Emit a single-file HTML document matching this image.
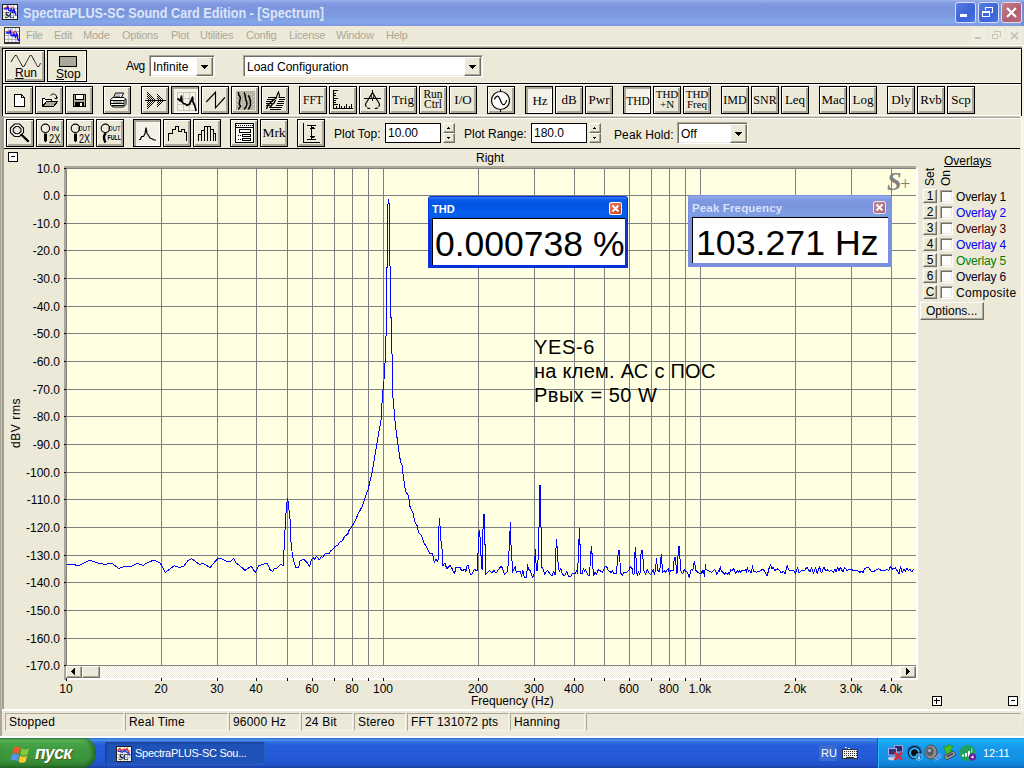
<!DOCTYPE html>
<html><head><meta charset="utf-8"><title>SpectraPLUS-SC</title>
<style>
html,body{margin:0;padding:0}
body{width:1024px;height:768px;overflow:hidden;position:relative;background:#ECE9D8;font-family:"Liberation Sans",sans-serif;font-size:12px;color:#000;line-height:1}
.a{position:absolute}
.t{position:absolute;white-space:nowrap;line-height:14px;font-size:12px}
svg{position:absolute;overflow:visible}
/* toolbar buttons */
.b{position:absolute;width:26px;height:26px;border:1px solid #000;background:#ECE9D8;box-shadow:inset 1px 1px 0 #fff,inset -2px -2px 0 #ACA899}
.b.p{box-shadow:inset 2px 2px 0 #ACA899,inset -1px -1px 0 #fff;background:#F3F1E8}
.b.p .bt{margin:1px 0 0 1px}
.b svg{left:0;top:0}
.bt{position:absolute;left:0;width:26px;text-align:center;font-family:"Liberation Serif",serif;font-size:13px;line-height:12px;white-space:nowrap}
/* sunken edit boxes */
.sunk{position:absolute;background:#fff;box-sizing:border-box;border:1px solid;border-color:#ACA899 #fff #fff #ACA899;box-shadow:inset 1px 1px 0 #716F64,inset -1px -1px 0 #ECE9D8}
.raised{position:absolute;background:#ECE9D8;box-sizing:border-box;border:1px solid;border-color:#fff #716F64 #716F64 #fff;box-shadow:inset -1px -1px 0 #ACA899}
.chk{position:absolute;width:13px;height:13px;box-sizing:border-box;background:#fff;border:1px solid;border-color:#ACA899 #fff #fff #ACA899;box-shadow:inset 1px 1px 0 #716F64,inset -1px -1px 0 #ECE9D8}
.ob{position:absolute;width:14px;height:14px;box-sizing:border-box;background:#ECE9D8;border:1px solid;border-color:#fff #716F64 #716F64 #fff;box-shadow:inset -1px -1px 0 #ACA899;font-size:12px;line-height:12px;text-align:center}
.m{position:absolute;top:29px;font-size:11px;line-height:13px;color:#ACA899;white-space:nowrap;letter-spacing:-.25px}
.yl{position:absolute;left:20px;width:40px;text-align:right;font-size:12px;line-height:14px;white-space:nowrap}
.xl{position:absolute;top:682px;width:40px;text-align:center;font-size:12px;line-height:14px;white-space:nowrap}
.sc{position:absolute;box-sizing:border-box;border:1px solid;border-color:#ACA899 #F6F5EE #F6F5EE #ACA899;letter-spacing:.2px;font-size:12px;line-height:14px;white-space:nowrap;padding:1px 0 0 3px;height:18px;top:713px}
</style></head><body>

<!-- title bar -->
<div class="a" id="tb" style="left:0;top:0;width:1024px;height:26px;background:linear-gradient(to bottom,#9DB0EC 0,#8AA2E6 2px,#7D97E0 5px,#7B96DF 12px,#7F9EE3 18px,#84A7E8 22px,#7E9DE4 25px,#7A94DC 26px)"></div>
<div class="a" style="left:1021px;top:2px;width:3px;height:24px;background:#6B80D0;opacity:.55"></div>
<!-- app icon -->
<svg style="left:2px;top:4px" width="16" height="16" viewBox="0 0 18 18" shape-rendering="crispEdges">
<rect x="0" y="0" width="18" height="18" fill="#222"/><rect x="1" y="1" width="16" height="16" fill="#F4F4F0"/>
<path d="M1 5h16M1 9h16M1 13h16M5 1v16M9 1v16M13 1v16" stroke="#B8B8B8" stroke-width="1"/>
<path d="M2 4.500l3-.5 2-1 1 2 2 .5 2-2 2 3 1.500 3" stroke="#F02020" stroke-width="1" fill="none" shape-rendering="auto"/>
<path d="M2 5.500h3.500l1-2.500 1 4 2 1 1-2.500 1.500 3.500 1.500-3 1 4 1.500 3" stroke="#1010F0" stroke-width="1.500" fill="none" shape-rendering="auto"/>
<text x="3" y="16" font-family="Liberation Serif" font-style="italic" font-weight="bold" font-size="9" fill="#000" shape-rendering="auto">SC</text>
</svg>
<div class="a" id="ttl" style="left:23px;top:5px;font-size:14px;line-height:16px;font-weight:bold;color:#DCE5F8;white-space:nowrap;transform:scaleX(.902);transform-origin:0 0">SpectraPLUS-SC Sound Card Edition - [Spectrum]</div>
<!-- caption buttons -->
<div class="a" style="left:955px;top:2px;width:19px;height:19px;border:1px solid #D6DEF5;border-radius:3px;background:linear-gradient(135deg,#5A7CE0,#3A63D8 60%,#4A72E0)"></div>
<div class="a" style="left:960px;top:14px;width:7px;height:3px;background:#fff"></div>
<div class="a" style="left:978px;top:2px;width:19px;height:19px;border:1px solid #D6DEF5;border-radius:3px;background:linear-gradient(135deg,#5A7CE0,#3A63D8 60%,#4A72E0)"></div>
<svg style="left:979px;top:3px" width="19" height="19" shape-rendering="crispEdges"><path d="M6.5 6.5v-2h7v5h-2" stroke="#fff" fill="none"/><path d="M6 4.5h8" stroke="#fff"/><rect x="3.5" y="8.500" width="7" height="5" stroke="#fff" fill="none"/><path d="M3 8.5h8" stroke="#fff" stroke-width="2"/></svg>
<div class="a" style="left:1001px;top:2px;width:19px;height:19px;border:1px solid #E8D8E0;border-radius:3px;background:linear-gradient(135deg,#C0808C,#B06070 60%,#B86878)"></div>
<svg style="left:1002px;top:3px" width="19" height="19"><path d="M5 5l9 9M14 5l-9 9" stroke="#fff" stroke-width="2.2"/></svg>

<!-- menu bar -->
<svg style="left:4px;top:27px" width="16" height="17" viewBox="0 0 17 17" preserveAspectRatio="none" shape-rendering="crispEdges">
<rect x="0" y="0" width="17" height="17" fill="#333"/><rect x="1" y="1" width="15" height="14" fill="#F8F8F8"/>
<path d="M1 4.5h15M1 8.500h15M1 12.5h15M4.500 1v14M8.500 1v14M12.500 1v14" stroke="#B0B0B0" stroke-width="1"/>
<path d="M2 5l3-.5 2-1 1 2 2 .5 2-2 2 3 1 3" stroke="#F02020" stroke-width="1" fill="none" shape-rendering="auto"/>
<path d="M2 6h3.500l1-2 1 4 2 1 1-2.500 1.500 3.500 1.500-3 1 4 1 3" stroke="#1010F0" stroke-width="1.500" fill="none" shape-rendering="auto"/>
</svg>
<div class="m" style="left:26px">File</div>
<div class="m" style="left:54px">Edit</div>
<div class="m" style="left:83px">Mode</div>
<div class="m" style="left:122px">Options</div>
<div class="m" style="left:171px">Plot</div>
<div class="m" style="left:200px">Utilities</div>
<div class="m" style="left:246px">Config</div>
<div class="m" style="left:289px">License</div>
<div class="m" style="left:336px">Window</div>
<div class="m" style="left:386px">Help</div>
<!-- MDI child buttons (disabled) -->
<div class="a" style="left:971px;top:28px;width:15px;height:15px;background:#EFEDE2"></div>
<div class="a" style="left:989px;top:28px;width:15px;height:15px;background:#EFEDE2"></div>
<div class="a" style="left:1007px;top:28px;width:15px;height:15px;background:#EFEDE2"></div>
<div class="a" style="left:975px;top:37px;width:6px;height:2px;background:#C8C5B4"></div>
<svg style="left:989px;top:28px" width="15" height="15" shape-rendering="crispEdges"><path d="M5.500 5v-2h6v5h-2M5 3.500h7" stroke="#C8C5B4" fill="none"/><rect x="3.500" y="6.500" width="5" height="4" stroke="#C8C5B4" fill="none"/><path d="M3 6.500h6" stroke="#C8C5B4"/></svg>
<svg style="left:1007px;top:28px" width="15" height="15"><path d="M4 4.500l7 6.500M11 4.500l-7 6.500" stroke="#C8C5B4" stroke-width="1.800"/></svg>

<!-- toolbar frame lines -->
<div class="a" style="left:0;top:45px;width:1024px;height:1px;background:#fff"></div>
<div class="a" style="left:0;top:46px;width:1024px;height:1px;background:#C5C2B2"></div>
<div class="a" style="left:0;top:47px;width:1024px;height:1px;background:#8E8B7C"></div>
<div class="a" style="left:0;top:46px;width:2px;height:665px;background:#ACA899"></div>
<div class="a" style="left:2px;top:48px;width:1020px;height:1px;background:#000"></div>
<div class="a" style="left:2px;top:48px;width:1px;height:68px;background:#000"></div>
<div class="a" style="left:3px;top:49px;width:1018px;height:1px;background:#fff"></div>
<div class="a" style="left:3px;top:49px;width:1px;height:66px;background:#fff"></div>
<div class="a" style="left:1021px;top:48px;width:1px;height:68px;background:#000"></div><div class="a" style="left:1021px;top:116px;width:1px;height:593px;background:#fff"></div>
<div class="a" style="left:1022px;top:46px;width:2px;height:665px;background:#F4F2E9"></div>
<div class="a" style="left:2px;top:83px;width:1020px;height:1px;background:#000"></div>
<div class="a" style="left:3px;top:84px;width:1018px;height:1px;background:#fff"></div>
<div class="a" style="left:3px;top:82px;width:1018px;height:1px;background:#F6F4EA"></div>
<div class="a" style="left:3px;top:115px;width:1018px;height:1px;background:#fff"></div>
<div class="a" style="left:2px;top:116px;width:1018px;height:1px;background:#D0CDBE"></div>
<div class="a" style="left:2px;top:117px;width:1018px;height:1px;background:#A5A293"></div>
<div class="a" style="left:2px;top:116px;width:2px;height:595px;background:#A29F8F"></div>
<div class="a" style="left:4px;top:118px;width:1017px;height:1px;background:#fff"></div>
<div class="a" style="left:4px;top:118px;width:1px;height:30px;background:#fff"></div>
<div class="a" style="left:4px;top:148px;width:1016px;height:1px;background:#000"></div>
<div class="a" style="left:1px;top:149px;width:1px;height:560px;background:#C4C1B2"></div>

<!-- Run / Stop -->
<div class="b" style="left:5px;top:50px;width:38px;height:30px">
<svg width="38" height="30" viewBox="0 0 38 30"><path d="M5 11 L9 4.500 L10.500 4.500 L16.500 15.500 L18 15.500 L24 4.500 L25.500 4.500 L31.500 15.500 L33 15.500 L34.500 12" stroke="#000" stroke-width="1" fill="none" stroke-dasharray="1.100 0.150"/></svg>
<div class="t" style="left:9px;top:15px;font-size:12px"><u>R</u>un</div></div>
<div class="b" style="left:47px;top:50px;width:38px;height:30px;background:#ECE9D8;box-shadow:inset -1px -1px 0 #fff">
<svg width="38" height="30" shape-rendering="crispEdges"><rect x="11.500" y="5.500" width="17" height="10" fill="#ACA899" stroke="#000"/></svg>
<div class="t" style="left:8px;top:16px;font-size:12px"><u>S</u>top</div></div>

<div class="t" style="left:126px;top:59px;letter-spacing:-.6px">Avg</div>
<div class="sunk" style="left:149px;top:55px;width:66px;height:22px"></div>
<div class="t" style="left:153px;top:60px">Infinite</div>
<div class="raised" style="left:196px;top:57px;width:17px;height:19px"></div>
<svg style="left:201px;top:65px" width="8" height="4" shape-rendering="crispEdges"><path d="M0 0h7l-3.500 4z" fill="#000"/></svg>
<div class="sunk" style="left:243px;top:55px;width:240px;height:22px"></div>
<div class="t" style="left:247px;top:60px">Load Configuration</div>
<div class="raised" style="left:464px;top:57px;width:17px;height:19px"></div>
<svg style="left:469px;top:65px" width="8" height="4" shape-rendering="crispEdges"><path d="M0 0h7l-3.500 4z" fill="#000"/></svg>

<!-- row 2 -->
<div class="b" style="left:5px;top:86px"><svg width="26" height="26" shape-rendering="crispEdges"><path d="M8.500 7.500h7l3 3v9h-10z" fill="#fff" stroke="#000"/><path d="M15.500 7.500v3h3" fill="none" stroke="#000"/></svg></div>
<div class="b" style="left:35px;top:86px"><svg width="26" height="26" shape-rendering="crispEdges"><path d="M6.500 19.500v-8h2l1 1h6v2" fill="#fff" stroke="#000"/><path d="M6.500 19.500l4-5h11l-4 5z" fill="#ACA899" stroke="#000"/><path d="M14.500 8.500l2-1.500h2l2 2v2M18.500 11l2 1 1-2" fill="none" stroke="#000" shape-rendering="auto"/></svg></div>
<div class="b" style="left:65px;top:86px"><svg width="26" height="26" shape-rendering="crispEdges"><rect x="7.500" y="7.500" width="12" height="12" fill="#ACA899" stroke="#000"/><rect x="9.500" y="7.500" width="8" height="5" fill="#fff" stroke="#000"/><rect x="9" y="15" width="9" height="5" fill="#000"/><rect x="14" y="16" width="2" height="3" fill="#fff"/></svg></div>
<div class="b" style="left:103px;top:86px"><svg width="26" height="26"><path d="M9.500 10.500l2-4.500h8l-2 4.500z" fill="#fff" stroke="#000"/><path d="M11.500 8h5M11 9.500h5" stroke="#000" stroke-width=".5"/><path d="M6.500 12.500l2.500-2h11l2 2v5l-2.500 2.500h-10.500l-2.500-2z" fill="#fff" stroke="#000"/><path d="M6.500 13.500h13.500l2-1.500M6.500 16.500h13.500M7.500 18.500h12M20 13.500v5.500" stroke="#000" fill="none"/><path d="M9 15h9" stroke="#ACA899" stroke-width="2"/></svg></div>
<div class="b" style="left:141px;top:86px"><svg width="26" height="26"><defs><pattern id="ck" width="2" height="2" patternUnits="userSpaceOnUse"><rect width="1" height="1" fill="#000"/><rect x="1" y="1" width="1" height="1" fill="#000"/></pattern></defs><path d="M5 5l8.500 8.500-8.500 8.500zM15 7l6.500 6.500-6.500 6.500z" fill="url(#ck)" shape-rendering="crispEdges"/><path d="M3 13.500h21" stroke="#000" shape-rendering="crispEdges"/></svg></div>
<div class="b p" style="left:171px;top:86px"><svg width="26" height="26"><path d="M5.500 5.500h18v18h-18zM11.500 5.500v18M17.500 5.500v18M5.500 11.500h18M5.500 17.500h18" stroke="#C9C6B5" stroke-width="1.600" fill="none" shape-rendering="crispEdges"/><path d="M5.500 11.500l3 2.500 1-5 .5 6 1.500 1.500 2 .5 1.500 1.500 2.500-1.500 2-4 1-3 .5 5 1.500 3 1 3 .5 3" stroke="#000" stroke-width="1.700" fill="none" stroke-linejoin="round"/></svg></div>
<div class="b" style="left:201px;top:86px"><svg width="26" height="26"><path d="M4.200 15l9.300-9.700v15.500l9.400-10.300" stroke="#000" fill="none" stroke-width="1.150"/></svg></div>
<div class="b" style="left:231px;top:86px"><svg width="26" height="26"><defs><pattern id="dz" width="4" height="4" patternUnits="userSpaceOnUse"><rect width="4" height="4" fill="#B4B1A2"/><rect x="1" y="1" width="1" height="1" fill="#E4E1D2"/><rect x="3" y="3" width="1" height="1" fill="#E4E1D2"/></pattern></defs><rect x="4" y="4" width="19" height="19" fill="url(#dz)" shape-rendering="crispEdges"/><path d="M6.300 5.200l.6 2.800 1.500 2.500-.6 3.100-.6 3.200 1.200 2.500-2.100 3.100M12.200 5.200l.9 3.400.7 3.800 1.200 3.700-.6 3.200-2.200 3.100M16.300 8.300l1.200 2.200.9 3.700v3.800l-.9 2.500-1.200 1.900" stroke="#000" stroke-width="1.500" fill="none"/></svg></div>
<div class="b" style="left:261px;top:86px"><svg width="26" height="26"><path d="M6 10.500h8.500M17 10.500h6M5 12.500h8M16.500 12.500h6.500M4 14.500h7M16 14.500h6M4 16.500h6M15 16.500h7M4 18.500h4M14 18.500h7M7 20.500h13M7.500 22.500h11.500" stroke="#000" fill="none" shape-rendering="crispEdges"/><path d="M14 11l1.500-4 1-2 1 3.500-.5 2.500" stroke="#000" fill="#ECE9D8" stroke-width="1.100"/><path d="M4.500 22l1.500-4 3-3 3-2.500 2.500-1.500M8 20.500l2-3 2-1.500 1.500-3" stroke="#000" fill="none" stroke-width="1.400"/></svg></div>

<div class="b" style="left:299px;top:86px"><div class="bt" style="top:7px;font-size:11.500px">FFT</div></div>
<div class="b" style="left:329px;top:86px"><svg width="26" height="26" shape-rendering="crispEdges" style="left:-1px;top:-1px"><path d="M4.500 4v18.500h19" stroke="#000" fill="none" stroke-width="1"/><path d="M5 4.500h4M5 7.500h2M5 9.500h2M5 12.500h4M5 14.500h2M5 16.500h2M5 18.500h4M7.500 22v-2M10.500 22v-4M12.500 22v-2M15.500 22v-2M17.500 22v-4M20.500 22v-2M22.500 22v-4" stroke="#000"/></svg></div>
<div class="b" style="left:359px;top:86px"><svg width="26" height="26" style="left:-1px;top:-1px"><path d="M13.500 4v10.500M5 12.500h17" stroke="#000" fill="none" shape-rendering="crispEdges"/><path d="M13.500 6.500l-7 11.500M13.500 6.500l7 11.500" stroke="#000" fill="none" stroke-width="1.200"/><path d="M12.500 8h2v4h-2z" fill="#fff" stroke="#000" stroke-width=".8"/><path d="M6.500 18c0 2.500 1.500 4.500 5 4.500M20.500 18c0 2.500-1.500 4.500-5 4.500" stroke="#000" fill="none" stroke-width="1.200" stroke-dasharray="3 1.200"/></svg></div>
<div class="b" style="left:389px;top:86px"><div class="bt" style="top:7px">Trig</div></div>
<div class="b" style="left:419px;top:86px"><div class="bt" style="top:2px;font-size:11.500px;line-height:10px">Run<br>Ctrl</div></div>
<div class="b" style="left:449px;top:86px"><div class="bt" style="top:7px">I/O</div></div>
<div class="b" style="left:487px;top:86px"><svg width="26" height="26" style="left:-1px;top:0"><circle cx="13.500" cy="13.500" r="9" stroke="#000" fill="#fff" stroke-width="1.200"/><path d="M13.500 2v3M13.500 22.500v2.500" stroke="#000" shape-rendering="crispEdges"/><path d="M7.400 12.500c1-3.500 3.500-4.500 5-1.500l2.200 5c1.500 3 4 2 5-3" stroke="#000" fill="none" stroke-width="1.200"/></svg></div>
<div class="b p" style="left:525px;top:86px"><div class="bt" style="top:7px">Hz</div></div>
<div class="b" style="left:555px;top:86px"><div class="bt" style="top:7px">dB</div></div>
<div class="b" style="left:585px;top:86px"><div class="bt" style="top:7px">Pwr</div></div>
<div class="b p" style="left:623px;top:86px"><div class="bt" style="top:7px;font-size:11.500px">THD</div></div>
<div class="b" style="left:653px;top:86px"><div class="bt" style="top:2px;font-size:11px;line-height:10px">THD<br>+N</div></div>
<div class="b" style="left:683px;top:86px"><div class="bt" style="top:2px;font-size:11px;line-height:10px">THD<br>Freq</div></div>
<div class="b" style="left:721px;top:86px"><div class="bt" style="top:7px;font-size:12px">IMD</div></div>
<div class="b" style="left:751px;top:86px"><div class="bt" style="top:7px;font-size:12px">SNR</div></div>
<div class="b" style="left:781px;top:86px"><div class="bt" style="top:7px">Leq</div></div>
<div class="b" style="left:819px;top:86px"><div class="bt" style="top:7px">Mac</div></div>
<div class="b" style="left:849px;top:86px"><div class="bt" style="top:7px">Log</div></div>
<div class="b" style="left:887px;top:86px"><div class="bt" style="top:7px">Dly</div></div>
<div class="b" style="left:917px;top:86px"><div class="bt" style="top:7px">Rvb</div></div>
<div class="b" style="left:947px;top:86px"><div class="bt" style="top:7px">Scp</div></div>

<!-- row 3 -->
<div class="b" style="left:6px;top:119px"><svg width="26" height="26"><path d="M7.500 4h5l4 4v4.500l-4 4h-5l-4-4v-4.500z" fill="#fff" stroke="#000" stroke-width="1.100"/><path d="M8.500 6.500h3.200l2.300 2.300v2.600l-2.300 2.300h-3.200l-2.300-2.300v-2.600z" fill="#ECE9D8" stroke="#000" stroke-width="1.100"/><path d="M14.500 14.800l6.600 6.300" stroke="#000" stroke-width="2.200" stroke-linecap="round"/></svg></div>
<div class="b" style="left:36px;top:119px"><svg width="26" height="26"><circle cx="8.400" cy="8.300" r="4.200" stroke="#000" fill="#F6F5EE" stroke-width="1.100"/><circle cx="8.400" cy="8.300" r="2.600" fill="#ECE9D8"/><path d="M7 13.500h3v7l-1.500 2-1.500-2z" fill="#000"/><text x="14.500" y="10.800" font-size="6.800" textLength="7.600" font-family="Liberation Sans" lengthAdjust="spacingAndGlyphs">IN</text><text x="12" y="22.700" font-size="12" textLength="11.300" font-family="Liberation Sans" lengthAdjust="spacingAndGlyphs">2X</text></svg></div>
<div class="b" style="left:66px;top:119px"><svg width="26" height="26"><circle cx="8.400" cy="8.300" r="4.200" stroke="#000" fill="#F6F5EE" stroke-width="1.100"/><circle cx="8.400" cy="8.300" r="2.600" fill="#ECE9D8"/><path d="M7 13.500h3v7l-1.500 2-1.500-2z" fill="#000"/><text x="10.800" y="10.800" font-size="6.800" textLength="13.100" font-family="Liberation Sans" lengthAdjust="spacingAndGlyphs">OUT</text><text x="12" y="22.700" font-size="12" textLength="11" font-family="Liberation Sans" lengthAdjust="spacingAndGlyphs">2X</text></svg></div>
<div class="b" style="left:96px;top:119px"><svg width="26" height="26"><circle cx="8.400" cy="8.300" r="4.200" stroke="#000" fill="#F6F5EE" stroke-width="1.100"/><circle cx="8.400" cy="8.300" r="2.600" fill="#ECE9D8"/><path d="M8.800 13c-2.500 3-2.500 6-.2 9.500" stroke="#000" stroke-width="2.400" fill="none"/><text x="11.100" y="10.800" font-size="6.800" textLength="12.500" font-family="Liberation Sans" lengthAdjust="spacingAndGlyphs">OUT</text><text x="10.500" y="19.900" font-size="6.800" font-weight="bold" textLength="13.400" font-family="Liberation Sans" lengthAdjust="spacingAndGlyphs">FULL</text></svg></div>
<div class="b p" style="left:133px;top:119px"><svg width="26" height="26"><path d="M5 19.500h1.500l1-3h2l1.500-3 1-6 1 6 1.500 2 1.500 2.500 2.500 1 1.500 1h2" stroke="#000" fill="none" stroke-width="1.200"/></svg></div>
<div class="b" style="left:163px;top:119px"><svg width="26" height="26" shape-rendering="crispEdges"><path d="M4.500 21v-8h4v-4h3v-3h3v5h3v-2h3v3h2v9" stroke="#000" fill="none"/></svg></div>
<div class="b" style="left:193px;top:119px"><svg width="26" height="26" shape-rendering="crispEdges"><path d="M4.500 21v-7h3v7M7.500 14v-4h3v11M10.500 10v-4h3v15M13.500 6h3v15M16.500 9h3v12M19.500 13h2v8" stroke="#000" fill="none"/></svg></div>
<div class="b" style="left:230px;top:119px"><svg width="26" height="26" shape-rendering="crispEdges"><rect x="4.500" y="3.500" width="18" height="19" fill="#fff" stroke="#000"/><path d="M5 5.500h17" stroke="#000" stroke-dasharray="1 1"/><path d="M5 7.500h17" stroke="#000"/><rect x="8.500" y="9.500" width="11" height="3" fill="#fff" stroke="#000"/><rect x="11.500" y="14.500" width="8" height="2" fill="#fff" stroke="#000"/><rect x="11.500" y="18.500" width="8" height="2" fill="#fff" stroke="#000"/><path d="M7 15.500h3M7 19.500h3" stroke="#000" stroke-dasharray="1 1"/></svg></div>
<div class="b" style="left:260px;top:119px"><div class="bt" style="top:7px;font-size:13.500px">Mrk</div></div>
<div class="b" style="left:297px;top:119px"><svg width="26" height="26" shape-rendering="crispEdges"><path d="M5.500 3v19.500h16" stroke="#000" fill="none"/><path d="M9 5.500h9M9 19.500h9M13.500 6v13" stroke="#000"/><path d="M11.500 8.500h5M12.500 7.500h3M11.500 16.500h5M12.500 17.500h3" stroke="#000"/></svg></div>

<div class="t" style="left:334px;top:127px">Plot Top:</div>
<div class="a" style="left:385px;top:123px;width:54px;height:18px;border:1px solid #000;background:#fff"></div>
<div class="t" style="left:388px;top:126px">10.00</div>
<div class="raised" style="left:443px;top:123px;width:12px;height:10px"></div>
<div class="raised" style="left:443px;top:133px;width:12px;height:10px"></div>
<div class="a" style="left:448px;top:127px;width:1px;height:1px;background:#000"></div><div class="a" style="left:447px;top:128px;width:3px;height:1px;background:#000"></div>
<div class="a" style="left:447px;top:137px;width:3px;height:1px;background:#000"></div><div class="a" style="left:448px;top:138px;width:1px;height:1px;background:#000"></div>
<div class="t" style="left:464px;top:127px">Plot Range:</div>
<div class="a" style="left:531px;top:123px;width:54px;height:18px;border:1px solid #000;background:#fff"></div>
<div class="t" style="left:534px;top:126px">180.0</div>
<div class="raised" style="left:589px;top:123px;width:12px;height:10px"></div>
<div class="raised" style="left:589px;top:133px;width:12px;height:10px"></div>
<div class="a" style="left:594px;top:127px;width:1px;height:1px;background:#000"></div><div class="a" style="left:593px;top:128px;width:3px;height:1px;background:#000"></div>
<div class="a" style="left:593px;top:137px;width:3px;height:1px;background:#000"></div><div class="a" style="left:594px;top:138px;width:1px;height:1px;background:#000"></div>
<div class="t" style="left:614px;top:128px;letter-spacing:.1px">Peak Hold:</div>
<div class="sunk" style="left:677px;top:122px;width:71px;height:22px"></div>
<div class="t" style="left:681px;top:127px">Off</div>
<div class="raised" style="left:730px;top:124px;width:17px;height:19px"></div>
<svg style="left:735px;top:132px" width="8" height="4" shape-rendering="crispEdges"><path d="M0 0h7l-3.500 4z" fill="#000"/></svg>

<!-- plot -->
<div class="a" style="left:64px;top:166px;width:852px;height:2px;background:#ACA899"></div>
<div class="a" style="left:64px;top:166px;width:2px;height:514px;background:#ACA899"></div>
<div class="a" style="left:66px;top:168px;width:1px;height:498px;background:#808080"></div>
<div class="a" style="left:916px;top:168px;width:2px;height:512px;background:#fff"></div>
<div class="a" style="left:66px;top:678px;width:852px;height:2px;background:#fff"></div>
<div class="a" style="left:67px;top:168px;width:849px;height:498px;background:#FFFFE1"></div>
<svg style="left:0;top:0" width="1024" height="768" viewBox="0 0 1024 768">
<path d="M67 168.5H916M67 195.5H916M67 223.5H916M67 250.5H916M67 278.5H916M67 306.5H916M67 333.5H916M67 361.5H916M67 389.5H916M67 416.5H916M67 444.5H916M67 472.5H916M67 499.5H916M67 527.5H916M67 555.5H916M67 582.5H916M67 610.5H916M67 638.5H916M67 665.5H916M161.5 168V666M217.5 168V666M256.5 168V666M287.5 168V666M312.5 168V666M334.5 168V666M352.5 168V666M368.5 168V666M383.5 168V666M478.5 168V666M534.5 168V666M574.5 168V666M604.5 168V666M629.5 168V666M651.5 168V666M669.5 168V666M685.5 168V666M700.5 168V666M795.5 168V666M851.5 168V666M891.5 168V666" stroke="#808080" stroke-width="1" fill="none" shape-rendering="crispEdges"/>
<path d="M64 168.5H66M64 195.5H66M64 223.5H66M64 250.5H66M64 278.5H66M64 306.5H66M64 333.5H66M64 361.5H66M64 389.5H66M64 416.5H66M64 444.5H66M64 472.5H66M64 499.5H66M64 527.5H66M64 555.5H66M64 582.5H66M64 610.5H66M64 638.5H66M64 665.5H66M66.5 678V681M161.5 678V681M217.5 678V681M256.5 678V681M287.5 678V681M312.5 678V681M334.5 678V681M352.5 678V681M368.5 678V681M383.5 678V681M478.5 678V681M534.5 678V681M574.5 678V681M604.5 678V681M629.5 678V681M651.5 678V681M669.5 678V681M685.5 678V681M700.5 678V681M795.5 678V681M851.5 678V681M891.5 678V681" stroke="#000" stroke-width="1" fill="none" shape-rendering="crispEdges"/>
<polyline points="66.5,564.4 74.4,564.4 76.25,565.5 79.4,565.5 89.4,560.25 96.25,562.5 104.4,564.4 110,563.4 113,564 118.75,568.5 124.4,566.6 131.25,566.4 137.25,563.4 143,565.4 148.75,562 153.75,560.25 160,562.75 165.4,572.5 174.4,565.6 178.75,567.5 183.75,566.25 187.5,561 191.6,558.5 196.25,562.25 199.75,564.5 203,563.25 210,567.5 217.5,558.75 221.25,558.5 226.5,561.25 230.6,561.25 233.75,558.5 236.25,563.1 238.75,564.75 245,570.4 251.25,566.25 255.4,572.5 258.75,565.9 266.25,563.25 267.5,563.5 270.25,570 272.5,571.5 274.4,568.75 276.9,568 280.6,564.25 283.5,565.5 283.75,555.25 284.75,535.25 285.6,519.6 286.5,505.25 287.5,498.4 288.75,504 289.4,517.75 290.4,520.25 290.6,541.5 291.5,542.75 292.25,555.25 295.6,567.5 298.75,567.5 300,560.9 303.75,559.4 306.25,561.5 309.75,566.5 311.25,559.6 313.1,557.75 314.4,559.4 316.5,556.25 319.4,560.25 321.25,556.5 322.5,557.5 325.6,553.4 329.4,553.4 330.6,550.5 332.5,549.6 335,546.5 337.5,545.5 340,541.9 342.25,540.9 344.4,536.75 348.1,533.4 348.75,530.9 351.9,526.5 355,520.9 358.1,514 362.5,505.9 365,497.75 368.1,489.4 372.3,471.7 375.4,452.9 377.5,439.4 379.2,430 381,420.6 381.7,413.3 382.1,399.8 382.9,397.7 383.1,384.2 384,382 384.2,364.4 385.2,362.3 385.4,337.3 386.5,335 386.5,269 387.5,266 387.5,208.5 388.5,199 389.5,207.5 389.6,266 390.6,266.5 390.6,317 391.4,318 391.4,353 392.3,355 392.3,396.7 393.3,398.75 394.6,417.5 396.25,432 398.3,446.7 400.4,461.25 402.1,465.4 403.5,478 405.2,489.4 406.5,492.9 408.6,495.75 410,506.5 412.9,512.9 414.8,521.5 417.2,525.8 418.6,532.7 421.5,535.2 423.7,542.3 427.2,548 429.4,553 432.5,553.8 434.4,563.1 435.8,558.8 438,561.7 438.4,540.2 439.4,518 440.3,530.1 440.6,540.9 441.6,541.6 442.3,554.5 442.7,566 444.4,563.1 445.4,563.8 446.6,569.1 450.2,565.2 452.3,569.1 454.5,573.8 455.9,567.4 460.2,567.4 461.6,571 465.2,569.1 465.9,571.7 466.6,566.7 468.4,564.8 469.5,571.7 470.9,575.3 472.4,573.8 474.5,568.8 475.9,571 477.4,570.3 477.8,559.5 478.5,538.7 479.2,530.1 480.2,538 480.7,555.2 481.4,555.9 481.8,568.8 482.4,569.5 482.7,542.3 483.4,514.4 484.5,514.4 484.8,544.5 485.5,545.2 485.5,574.6 489.6,570.5 491.7,573.1 493.9,570.3 496,573.1 501,566.2 502.4,568.1 504.6,574.6 507.5,571.7 508.6,560.2 509.6,537.3 510.5,522.3 511,545.2 511.8,545.9 512.2,573.1 515.3,566.2 516.4,573.1 517.9,571 520.7,571.7 521.4,576.7 522.9,570.3 524.3,577.4 526.5,577.4 527.5,564.5 528.6,569.5 530,570.3 532.6,578.1 534.3,573.1 534.8,560.9 535.3,549.1 535.9,560.9 536.5,571 537.9,570.3 538.4,527.3 539.4,526.6 539.4,485 540.5,485 540.5,526.6 541.5,527.3 541.8,567.4 542.9,568.8 544.7,574.6 547.2,570.3 549.4,573.1 552.2,576 553.7,571 555.1,575.3 555.5,557.4 556.5,538.7 557.3,549.5 557.7,557.4 558.3,566 559.4,571.7 560.6,568.1 562.3,573.8 564.4,576 566.6,571.7 568.7,576.3 570.9,576 572.3,573.1 575.2,573.8 576.6,570.3 577.6,573.8 578.5,550.2 579.5,528 580.2,550.2 580.9,573.8 582.3,573.1 583.5,568.1 584.5,571.7 585.5,569.5 588.1,575.3 589.5,575.3 590.5,558.1 591.4,545.9 592.4,558.1 593.4,576.3 595.2,571.7 596.2,574.6 598.5,569.5 602.4,572.4 605.3,566 606.7,566.7 608.1,570.3 611,572.4 612.4,570.5 613.9,573.8 616.4,573.8 617.4,560.9 618.4,550.9 619.6,550.9 620,562.4 620.7,573.1 622.4,575.3 623.9,572.4 626.7,572.4 628.9,570.5 630.3,566.7 631.8,567.4 633.2,574.6 634.2,573.8 634.6,560.2 635.3,546.6 636.2,560.2 636.9,573.75 637.5,575.6 638.5,571.25 639.4,574.4 640.25,571.9 640.6,561.25 641.25,550 642.75,550.6 643.1,561.25 644,570.6 645.4,574.4 647.25,569.4 648.75,572.5 650.6,574.6 653.4,569.4 654.4,574.6 655.6,568.75 656.5,558.1 657.5,569.4 658.75,571.9 659.75,571.9 660.4,562.5 661.4,554 662,563.75 662.75,572.5 664.4,570.6 665.4,572.5 668.5,568.1 669.4,575 670.4,570.6 673.1,570.4 673.75,563.75 674.4,557.1 675.6,557.1 676,565 676.5,573.75 677.5,572.5 677.9,558.75 678.4,546.25 679.75,546.25 680,558.75 680.6,559.4 681,571.25 682.5,573.75 684.6,569.4 685.6,571.9 686.9,571.5 689.4,577.5 690.6,570.6 691.9,569.4 692.5,571.25 693.5,566.25 694.4,560.9 695.4,566.9 695.9,570.6 697.5,571.9 699.4,573.4 701.25,573.75 702.25,570.6 703.1,573.75 703.75,570 704.4,576.9 705,570 705.4,564 706,568.75 707.5,570.6 710,571.25 711.5,572.5 714.75,569.1 716.9,574.4 717.5,573.75 718.5,570 719.4,571.9 720.4,566.25 721.25,571.25 722.5,571.9 724.4,574.6 725.6,572.5 727.5,574.6 728.5,572.5 729.4,574.4 730.6,569.4 731.5,571.25 733.5,568.1 735.4,573.5 737.5,570.4 738.4,572.5 739.4,570.4 740.6,572.5 741.9,570.4 744.4,570.4 745.6,569.4 746.25,572.5 747.5,567.25 748.5,571.9 749.4,570 750.6,572.5 751.6,571.9 752.5,565 753.4,571.9 755.6,571.25 756.5,572.5 758.1,571.25 760,571.25 763.1,568.9 765.5,572.8 767.3,575.9 768.6,569.7 770.5,564.2 771.7,568.9 773.3,567.3 774.8,570.5 777.2,568.9 779.5,570.5 781.1,573.1 783.4,571.25 785,573.6 787.3,565 788.6,570 793.6,570.5 795.6,573.6 797.5,567.3 799.1,572.8 801.4,570.5 804.5,570.5 806.9,567.3 810,572 811.6,567.3 813.6,573.6 815.5,566.9 817.3,573.6 819.4,566.6 821.4,573.1 824.1,566.9 825.6,571.25 827.2,569.7 829.5,571.25 831.9,570.5 833.4,572.8 835,568.9 836.1,572 837.7,567.3 838.9,571.25 840.5,567.3 842.8,572 844.8,567.3 846.7,570.5 850.6,569.2 853.75,570.5 857.7,570.5 860,572.5 861.6,571.25 863.1,572.5 865,568.1 868.6,567.8 871.25,571.25 874.1,571.25 878.4,568.6 881.1,570.5 885,570.5 887.3,568.9 888.4,570.9 890.5,566.6 892.5,569.2 895.2,567.8 899.1,573.6 900.6,565.8 902.2,572.8 904.1,568.9 905.3,572 906.9,568.1 908.4,570.5 910,568.9 911.6,572 913.9,568.9" stroke="#0000FF" stroke-width="1" fill="none" stroke-linejoin="bevel" shape-rendering="crispEdges"/>
</svg>
<div class="yl" style="top:162px">10.0</div>
<div class="yl" style="top:189px">0.0</div>
<div class="yl" style="top:217px">-10.0</div>
<div class="yl" style="top:244px">-20.0</div>
<div class="yl" style="top:272px">-30.0</div>
<div class="yl" style="top:300px">-40.0</div>
<div class="yl" style="top:327px">-50.0</div>
<div class="yl" style="top:355px">-60.0</div>
<div class="yl" style="top:383px">-70.0</div>
<div class="yl" style="top:410px">-80.0</div>
<div class="yl" style="top:438px">-90.0</div>
<div class="yl" style="top:466px">-100.0</div>
<div class="yl" style="top:493px">-110.0</div>
<div class="yl" style="top:521px">-120.0</div>
<div class="yl" style="top:549px">-130.0</div>
<div class="yl" style="top:576px">-140.0</div>
<div class="yl" style="top:604px">-150.0</div>
<div class="yl" style="top:632px">-160.0</div>
<div class="yl" style="top:659px">-170.0</div>
<div class="xl" style="left:46px">10</div>
<div class="xl" style="left:141px">20</div>
<div class="xl" style="left:197px">30</div>
<div class="xl" style="left:236px">40</div>
<div class="xl" style="left:292px">60</div>
<div class="xl" style="left:332px">80</div>
<div class="xl" style="left:363px">100</div>
<div class="xl" style="left:458px">200</div>
<div class="xl" style="left:514px">300</div>
<div class="xl" style="left:554px">400</div>
<div class="xl" style="left:609px">600</div>
<div class="xl" style="left:649px">800</div>
<div class="xl" style="left:680px">1.0k</div>
<div class="xl" style="left:775px">2.0k</div>
<div class="xl" style="left:831px">3.0k</div>
<div class="xl" style="left:871px">4.0k</div>
<!-- scrollbar -->
<div class="a" style="left:66px;top:666px;width:850px;height:12px;background:repeating-conic-gradient(#fff 0 25%,#ECE9D8 0 50%) 0 0/2px 2px"></div>
<div class="raised" style="left:66px;top:666px;width:16px;height:12px"></div>
<svg style="left:71px;top:668px" width="5" height="8" shape-rendering="crispEdges"><path d="M4 0v7l-4-3.500z" fill="#000"/></svg>
<div class="raised" style="left:82px;top:666px;width:18px;height:12px"></div>
<div class="raised" style="left:900px;top:666px;width:16px;height:12px"></div>
<svg style="left:906px;top:668px" width="5" height="8" shape-rendering="crispEdges"><path d="M0 0v7l4-3.500z" fill="#000"/></svg>
<!-- titles -->
<div class="t" style="left:476px;top:151px">Right</div>
<div class="t" style="left:471px;top:694px">Frequency (Hz)</div>
<div class="t" id="dbv" style="left:-14px;top:416px;width:60px;text-align:center;transform:rotate(-90deg);letter-spacing:.6px">dBV rms</div>
<!-- small boxes -->
<div class="a" style="left:8px;top:152px;width:8px;height:8px;border:1px solid #000;background:#fff"></div><div class="a" style="left:11px;top:156px;width:4px;height:1px;background:#000"></div>
<div class="a" style="left:932px;top:696px;width:8px;height:8px;border:1px solid #000;background:#fff"></div><div class="a" style="left:934px;top:700px;width:6px;height:1px;background:#000"></div><div class="a" style="left:936px;top:698px;width:1px;height:6px;background:#000"></div>
<div class="a" style="left:1008px;top:696px;width:8px;height:8px;border:1px solid #000;background:#fff"></div><div class="a" style="left:1011px;top:700px;width:4px;height:1px;background:#000"></div>
<!-- S+ logo -->
<div class="a" style="left:887px;top:168.500px;font-family:'Liberation Serif',serif;font-style:italic;font-weight:bold;font-size:26px;line-height:26px;color:#808080">S</div>
<div class="a" style="left:899px;top:175px;font-family:'Liberation Serif',serif;font-style:italic;font-size:18px;line-height:18px;color:#808080">+</div>

<!-- overlays panel -->
<div class="t" style="left:944px;top:154px;text-decoration:underline">Overlays</div>
<div class="t" style="left:917px;top:170px;width:26px;text-align:center;transform:rotate(-90deg)">Set</div>
<div class="t" style="left:933px;top:171px;width:26px;text-align:center;transform:rotate(-90deg)">On</div>
<div class="ob" style="left:923px;top:189px">1</div><div class="chk" style="left:940px;top:190px"></div><div class="t" style="left:956px;top:190px;color:#000;letter-spacing:-.15px">Overlay 1</div>
<div class="ob" style="left:923px;top:205px">2</div><div class="chk" style="left:940px;top:206px"></div><div class="t" style="left:956px;top:206px;color:#0000FF;letter-spacing:-.15px">Overlay 2</div>
<div class="ob" style="left:923px;top:221px">3</div><div class="chk" style="left:940px;top:222px"></div><div class="t" style="left:956px;top:222px;color:#400000;letter-spacing:-.15px">Overlay 3</div>
<div class="ob" style="left:923px;top:237px">4</div><div class="chk" style="left:940px;top:238px"></div><div class="t" style="left:956px;top:238px;color:#0000FF;letter-spacing:-.15px">Overlay 4</div>
<div class="ob" style="left:923px;top:253px">5</div><div class="chk" style="left:940px;top:254px"></div><div class="t" style="left:956px;top:254px;color:#008000;letter-spacing:-.15px">Overlay 5</div>
<div class="ob" style="left:923px;top:269px">6</div><div class="chk" style="left:940px;top:270px"></div><div class="t" style="left:956px;top:270px;color:#000020;letter-spacing:-.15px">Overlay 6</div>
<div class="ob" style="left:923px;top:285px">C</div><div class="chk" style="left:940px;top:286px"></div><div class="t" style="left:956px;top:286px;letter-spacing:.35px">Composite</div>
<div class="raised" style="left:920px;top:302px;width:64px;height:18px"></div>
<div class="t" style="left:926px;top:304px">Options...</div>

<!-- THD window -->
<div class="a" style="left:428px;top:196px;width:200px;height:72px;background:#0831D9;border-radius:3px 3px 0 0"></div>
<div class="a" style="left:429px;top:197px;width:198px;height:22px;border-radius:2px 2px 0 0;background:linear-gradient(to bottom,#2E7BFA 0,#0A5BE8 3px,#0355E0 8px,#0460F0 16px,#0558E0 22px)"></div>
<div class="a" style="left:431px;top:219px;width:194px;height:46px;background:#0A4FDD"></div>
<div class="a" style="left:432px;top:218px;width:193px;height:47px;background:#000"></div>
<div class="a" style="left:433px;top:219px;width:192px;height:46px;background:#fff"></div>
<div class="a" style="left:432px;top:203px;font-size:11px;line-height:13px;font-weight:bold;color:#fff">THD</div>
<div class="a" style="left:609px;top:202px;width:11px;height:11px;border:1px solid #fff;border-radius:2px;background:linear-gradient(135deg,#E88068,#C84020)"></div>
<svg style="left:609px;top:202px" width="13" height="13"><path d="M3.500 3.500l6 6M9.500 3.500l-6 6" stroke="#fff" stroke-width="1.800"/></svg>
<div class="a" id="thdv" style="left:435px;top:224px;font-size:35.5px;line-height:40px;white-space:nowrap">0.000738 %</div>

<!-- Peak Frequency window -->
<div class="a" style="left:688px;top:195px;width:204px;height:72px;background:#7B8FE0;border-radius:3px 3px 0 0"></div>
<div class="a" style="left:689px;top:196px;width:202px;height:22px;border-radius:2px 2px 0 0;background:linear-gradient(to bottom,#96AAEC 0,#7E98E2 4px,#7A94DE 10px,#7F9EE6 18px,#7A96E0 22px)"></div>
<div class="a" style="left:692px;top:217px;width:196px;height:46px;background:#000"></div>
<div class="a" style="left:693px;top:218px;width:195px;height:45px;background:#fff"></div>
<div class="a" style="left:692px;top:202px;font-size:11.5px;line-height:13px;font-weight:bold;color:#D8E2F8;letter-spacing:.15px">Peak Frequency</div>
<div class="a" style="left:873px;top:201px;width:11px;height:11px;border:1px solid #E6E0EC;border-radius:2px;background:linear-gradient(135deg,#C08898,#B06878)"></div>
<svg style="left:873px;top:201px" width="13" height="13"><path d="M3.500 3.500l6 6M9.500 3.500l-6 6" stroke="#fff" stroke-width="1.800"/></svg>
<div class="a" id="pfv" style="left:696px;top:223px;font-size:35.7px;line-height:40px;white-space:nowrap">103.271 Hz</div>

<!-- annotation -->
<div class="a" id="ann" style="left:534px;top:335px;font-size:20px;line-height:24px;white-space:nowrap"><span style="letter-spacing:.65px">YES-6</span><br><span style="letter-spacing:.26px">на клем. АС с ПОС</span><br><span style="letter-spacing:.5px">Рвых = 50 W</span></div>

<!-- status bar -->
<div class="a" style="left:2px;top:709px;width:1022px;height:2px;background:#fff"></div>
<div class="a" style="left:0;top:711px;width:1024px;height:25px;background:#ECE9D8"></div>
<div class="a" style="left:0;top:711px;width:2px;height:25px;background:#ACA899"></div>
<div class="sc" style="left:5px;width:119px">Stopped</div>
<div class="sc" style="left:125px;width:103px">Real Time</div>
<div class="sc" style="left:229px;width:71px">96000 Hz</div>
<div class="sc" style="left:301px;width:52px">24 Bit</div>
<div class="sc" style="left:354px;width:52px">Stereo</div>
<div class="sc" style="left:407px;width:102px">FFT 131072 pts</div>
<div class="sc" style="left:510px;width:75px">Hanning</div>
<div class="sc" style="left:586px;width:435px;border-color:#ACA899 #F2F0E6 #F2F0E6 #ACA899"></div>
<div class="a" style="left:0;top:736px;width:1024px;height:2px;background:#fff"></div>

<!-- taskbar -->
<div class="a" style="left:0;top:738px;width:1024px;height:30px;background:linear-gradient(to bottom,#3168D5 0,#4993E6 2px,#2F6FDC 4px,#245DDB 8px,#2459D6 20px,#2050C8 27px,#1941A5 30px)"></div>
<!-- start button -->
<div class="a" style="left:0;top:738px;width:96px;height:30px;border-radius:0 12px 12px 0/0 15px 15px 0;background:linear-gradient(to bottom,#3A8A3A 0,#62B862 2px,#48A648 5px,#3E9A3E 12px,#3C963C 20px,#318231 27px,#266E26 30px);box-shadow:inset -3px 0 4px rgba(20,70,20,.6)"></div>
<svg style="left:11px;top:743px" width="22" height="22" viewBox="0 0 20 20"><path d="M2.500 4.500c2-1.500 4.500-1.500 6.500 0l-1.500 5.500c-2-1.500-4.500-1.500-6.500 0z" fill="#F0582A"/><path d="M10 4.800c2 1.500 4.500 1.500 6.500 0l-1.500 5.500c-2 1.500-4.500 1.500-6.500 0z" fill="#86C83E"/><path d="M.800 11c2-1.500 4.500-1.500 6.500 0l-1.500 5.500c-2-1.500-4.500-1.500-6.500 0z" fill="#5C90F0"/><path d="M8.300 11.300c2 1.500 4.500 1.500 6.500 0l-1.500 5.500c-2 1.500-4.500 1.500-6.500 0z" fill="#FCC832"/></svg>
<div class="a" style="left:35px;top:742px;font-size:17.5px;line-height:22px;font-weight:bold;font-style:italic;color:#fff;text-shadow:1px 1px 1px rgba(90,60,0,.7);letter-spacing:-.6px">пуск</div>
<!-- task button -->
<div class="a" style="left:105px;top:742px;width:160px;height:23px;border-radius:3px;background:#1E52B7;box-shadow:inset 1px 1px 2px #153C8C,inset -1px -1px 1px #2E62C8"></div>
<svg style="left:116px;top:746px" width="16" height="16" viewBox="0 0 18 18" shape-rendering="crispEdges">
<rect x="0" y="0" width="18" height="18" fill="#222"/><rect x="1" y="1" width="16" height="16" fill="#F4F4F0"/>
<path d="M1 5h16M1 9h16M1 13h16M5 1v16M9 1v16M13 1v16" stroke="#B8B8B8" stroke-width="1"/>
<path d="M2 5l2-2 2 2 2-1 2 1 2-2 2 3 1 3" stroke="#E02020" stroke-width="1.400" fill="none" shape-rendering="auto"/>
<path d="M2 6l3 0 2 1 3-2 2 2 2 1 2 3" stroke="#2030E0" stroke-width="1.400" fill="none" shape-rendering="auto"/>
<text x="3" y="16" font-family="Liberation Serif" font-style="italic" font-weight="bold" font-size="9" fill="#000" shape-rendering="auto">SC</text>
</svg>
<div class="a" style="left:135px;top:747px;font-size:11px;line-height:13px;color:#fff;white-space:nowrap;letter-spacing:-.28px">SpectraPLUS-SC Sou...</div>
<!-- language -->
<div class="a" style="left:819px;top:745px;width:18px;height:16px;background:#3A6AD0"></div>
<div class="a" style="left:821px;top:747px;font-size:11px;line-height:13px;color:#fff">RU</div>
<svg style="left:842px;top:746px" width="17" height="14" shape-rendering="crispEdges"><rect x=".5" y="3.500" width="15" height="9" fill="#F0F0F0" stroke="#333"/><path d="M2 5.500h13M2 7.500h13M2 9.500h13" stroke="#333" stroke-dasharray="1 1"/><path d="M4 11.500h8" stroke="#333"/><path d="M3 1.500h2M6 2.500h2" stroke="#eee"/></svg>
<!-- tray -->
<div class="a" style="left:877px;top:738px;width:147px;height:30px;background:linear-gradient(to bottom,#1290E8 0,#19B4F4 2px,#17A4F0 5px,#1596EA 12px,#1290E4 22px,#0E7CD0 28px,#0C64B0 30px);box-shadow:inset 1px 0 0 #0A5AA8,inset 2px 0 0 #2CB8F8"></div>
<svg style="left:886px;top:744px" width="92" height="18" viewBox="0 0 92 18">
<rect x="8.500" y="1.500" width="8" height="6.500" fill="#2A2A66" stroke="#A8A0DC"/><rect x="2.500" y="4.500" width="8" height="6.500" fill="#34347A" stroke="#B0A8E0"/><ellipse cx="6" cy="14.500" rx="4" ry="1.800" fill="#D0CCF0"/><path d="M5 11.500h3v2h-3z" fill="#9890C8"/><path d="M8.500 8.500l7.500 7.500M16 8.500l-7.500 7.500" stroke="#E82424" stroke-width="2.300"/>
<circle cx="28.500" cy="8.500" r="7.300" fill="#0A0C18"/><circle cx="28.500" cy="8.500" r="7" fill="none" stroke="#2C8CD8" stroke-width="1"/><path d="M31 12.500a4.500 4.500 0 1 1 2-4" fill="none" stroke="#28B0F4" stroke-width="2"/><circle cx="33" cy="13" r="3.400" fill="#1080C8" stroke="#7CD0F8" stroke-width=".8"/><path d="M33 10.800v.8M33 12.500v2.800" stroke="#fff" stroke-width="1.300"/>
<ellipse cx="45" cy="8" rx="6" ry="7" fill="#8C8C8C" stroke="#4A4A4A"/><ellipse cx="44" cy="7.500" rx="3.500" ry="4.500" fill="#5C5C64"/><circle cx="43.500" cy="6.500" r="1.500" fill="#B8B8C8"/><path d="M48 14.500q4-1 5.500-5M49.500 16.500q4.500-1.500 6-6" stroke="#B8B0F0" stroke-width="1" fill="none"/>
<path d="M57.500 2l3 1 1.500-2.500 5 2-3 4.500 2.500 1-6 2.500z" fill="#48C020" stroke="#208010" stroke-width=".6"/><path d="M58 12l9.500-5 2.500 4-9.500 5z" fill="#9A9A9A" stroke="#3C3C3C" stroke-width=".8"/><path d="M61 12.500l6-3" stroke="#404060" stroke-width="1.500"/>
<circle cx="81.500" cy="9" r="8" fill="#1FA05C"/><path d="M76 10.500h2v2h-2zM79 9h2v3.500h-2zM82 7h2v5.500h-2z" fill="#fff"/><path d="M85 4.500h1.500v4h-1.500z" fill="#7CD8A0"/><circle cx="86.500" cy="13" r="3.700" fill="#6A1FA0"/><circle cx="86.500" cy="13" r="1.200" fill="#fff"/>
</svg>
<div class="a" style="left:983px;top:747px;font-size:11px;line-height:13px;color:#fff">12:11</div>
</body></html>
